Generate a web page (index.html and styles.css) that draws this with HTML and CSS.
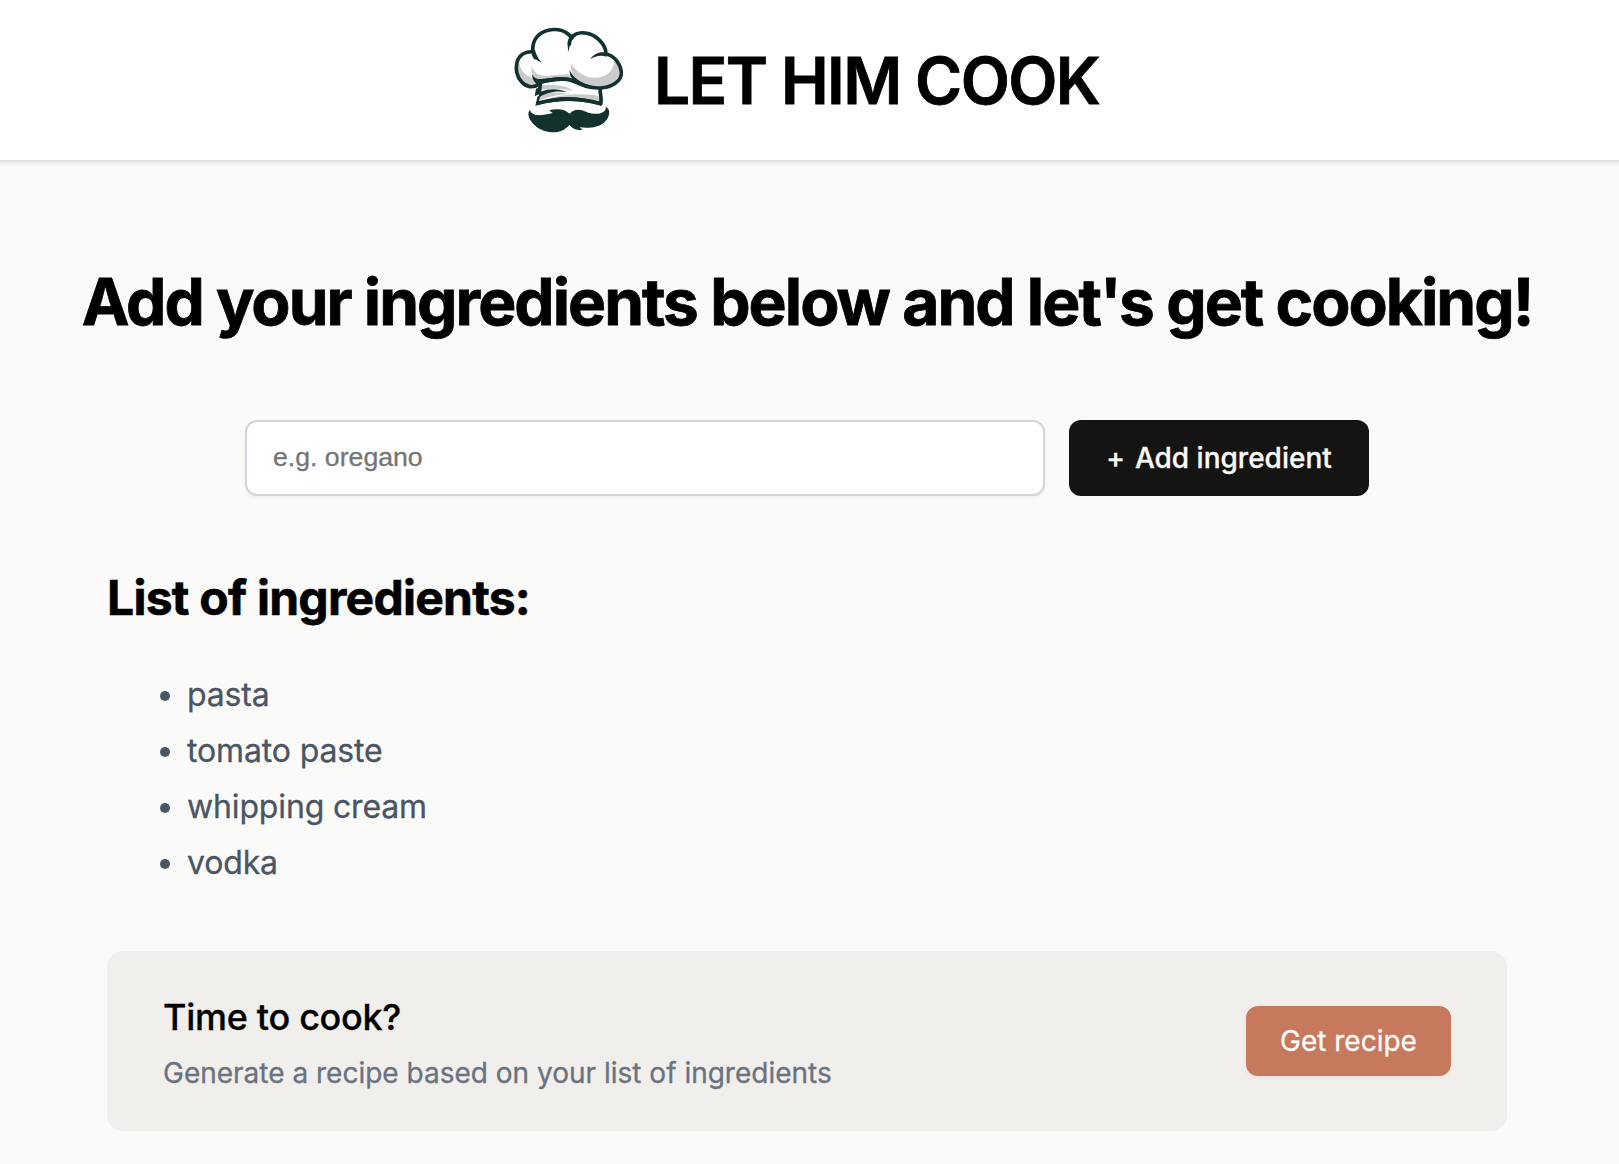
FILE: index.html
```
<!DOCTYPE html>
<html lang="en">
<head>
<meta charset="utf-8">
<title>Let Him Cook</title>
<link rel="stylesheet" href="styles.css">
</head>
<body>
<header class="header">
  <svg class="logo" viewBox="0 0 420 390" aria-hidden="true">
    <path class="fill-white" d="M121 204 C102 220 80 216 66 203 C53 188 47 165 50 144 C56 119 75 109 98 109 C96 70 124 43 162 43 C185 43 203 52 215 67 C228 56 244 51 260 54 C293 60 314 84 318 116 C345 122 362 148 364 175 C363 199 343 212 316 220 L302 228 C300 240 306 250 302 268 C235 252 168 253 109 268 L120 235 L110 240 Z"/>
    <g class="shade">
      <path d="M57 142 C63 172 80 187 108 192 L118 209 C92 220 72 211 62 192 C55 175 52 157 57 142Z"/>
      <path d="M94 149 C101 174 116 184 143 182 L203 177 C217 181 216 188 211 192 C180 184 145 191 119 203 C103 195 93 177 94 149Z"/>
      <path d="M210 143 C229 171 259 190 289 188 C321 185 339 169 344 137 C351 137 355 148 358 169 C357 201 334 213 300 216 C266 216 239 208 219 190Z"/>
      <path d="M124 209 C158 211 190 206 222 228 C189 220 157 220 121 224Z"/>
      <path d="M119 238 C157 230 184 231 208 237 C176 238 149 244 118 257Z"/>
      <path d="M137 254 C184 237 234 234 288 241 L300 247 L300 265 C243 246 191 246 137 254Z"/>
    </g>
    <g class="outline">
      <path d="M120 206 C99 222 78 215 65 201 C51 185 46 163 51 142 C57 120 76 109 99 110"/>
      <path d="M106 128 C92 106 98 77 116 60 C140 39 182 38 204 57 C210 62 213 65 216 69"/>
      <path d="M208 88 C208 77 214 65 226 58 C246 48 277 55 296 73 C311 87 318 100 318 117 C343 122 362 147 364 173 C365 200 333 218 300 219 C267 220 239 209 219 196 C192 185 151 195 116 202"/>
      <path d="M121 205 L118 233"/>
      <path d="M301 222 C298 237 307 244 302 266"/>
      <path d="M113 265 C173 248 235 248 302 266"/>
    </g>
    <g class="ink">
      <path d="M99 105 C101 127 108 137 124 142 C117 132 110 124 105 105Z"/>
      <path d="M205 110 C202 91 202 75 211 66 L219 70 C208 82 210 97 205 110Z"/>
      <path d="M270 133 C284 112 302 110 321 112 L320 125 C301 119 287 123 270 133Z"/>
      <path d="M96 176 C103 195 120 194 142 190 C174 186 205 187 217 191 C211 183 208 176 209 164 C217 188 245 206 282 214 L275 222 C242 216 218 199 190 198 C160 197 136 205 112 208 C102 202 96 189 96 176Z"/>
      <path d="M108 221 L124 215 L120 231 C151 219 177 222 200 231 C167 226 137 232 113 250 L118 237 L104 244Z"/>
      <path d="M106 272 L113 244 L121 243 L116 261 C180 239 244 243 305 265 L304 272 C237 253 173 254 106 272Z"/>
      <path d="M90 285 C96 305 123 303 158 294 L147 286 C178 280 193 283 209 296 C222 280 241 282 258 290 C282 301 321 298 317 275 C333 282 331 306 312 323 C295 337 269 340 239 337 L248 345 C230 347 216 340 209 329 C193 347 174 353 154 352 C125 349 104 336 91 315 C84 303 83 293 90 285Z"/>
    </g>
  </svg>
  <h1 class="brand">LET HIM COOK</h1>
</header>
<main class="main">
  <h2 class="tagline">Add your ingredients below and let's get cooking!</h2>
  <form class="add-form">
    <input class="add-input" type="text" placeholder="e.g. oregano" aria-label="Add ingredient">
    <button class="add-button" type="button"><span class="plus">+</span><span>Add ingredient</span></button>
  </form>
  <section class="content">
    <h2 class="list-title">List of ingredients:</h2>
    <ul class="list">
      <li>pasta</li>
      <li>tomato paste</li>
      <li>whipping cream</li>
      <li>vodka</li>
    </ul>
    <div class="card">
      <div>
        <h3 class="card-title">Time to cook?</h3>
        <p class="card-text">Generate a recipe based on your list of ingredients</p>
      </div>
      <button class="recipe-button" type="button">Get recipe</button>
    </div>
  </section>
</main>
</body>
</html>
```
FILE: styles.css
```
* { box-sizing: border-box; }
body { margin: 0; background: #fafaf8; color: #000; font-family: Inter, sans-serif; overflow: hidden; -webkit-text-stroke: .3px currentColor; }
h1, h2, h3, p, ul { margin: 0; }
button { border: 0; font-family: inherit; }

.header { display: flex; height: 160px; margin: 0 -8px; padding: 15px 0 15px 508px; gap: 14px; background: #fff; box-shadow: 0 2px 6px rgba(0,0,0,.1), 0 2px 4px -2px rgba(0,0,0,.1); }
.logo { width: 140px; height: 130px; flex: none; }
.fill-white { fill: #fff; }
.shade { fill: #cbcbcb; }
.outline { fill: none; stroke: #12312f; stroke-width: 11; stroke-linecap: round; stroke-linejoin: round; }
.ink { fill: #12312f; }
.brand { font-size: 64px; line-height: 132px; font-weight: 600; letter-spacing: -1.6px; white-space: nowrap; -webkit-text-stroke-width: .8px; }

.main { width: 1614px; display: flex; flex-direction: column; align-items: center; padding-top: 103px; }
.tagline { font-size: 64px; line-height: 77px; font-weight: 700; letter-spacing: -1.96px; white-space: nowrap; -webkit-text-stroke-width: .8px; }
.add-form { display: flex; gap: 24px; margin-top: 80px; }
.add-input { width: 800px; height: 76px; border: 2px solid #d1d5db; border-radius: 12px; padding: 0 26px 2px; background: #fff; font: 26.667px "Liberation Sans", Arial, sans-serif; box-shadow: 0 2px 4px rgba(0,0,0,.05); }
.add-input::placeholder { color: #757575; }
.add-button { display: flex; align-items: center; justify-content: center; gap: 10px; width: 300px; height: 76px; border-radius: 12px; background: #141413; color: #fafaf8; font-size: 28px; font-weight: 500; padding: 0; }

.content { width: 1400px; }
.list-title { margin-top: 73px; font-size: 48px; line-height: 58px; font-weight: 700; letter-spacing: -.74px; -webkit-text-stroke-width: .6px; }
.list { margin-top: 40px; padding-left: 80px; color: #4b5563; font-size: 32px; line-height: 56px; letter-spacing: -.15px; }
.card { display: flex; align-items: center; justify-content: space-between; height: 180px; margin-top: 60px; padding: 0 56px; border-radius: 16px; background: #f0efeb; }
.card-title { padding-top: 8px; font-size: 36px; line-height: 56px; font-weight: 500; letter-spacing: -.3px; }
.card-text { font-size: 28px; line-height: 56px; color: #6b7280; }
.recipe-button { width: 205px; height: 70px; border-radius: 12px; background: #c6795d; color: #fafaf8; font-size: 28px; padding: 0; box-shadow: 0 2px 4px rgba(0,0,0,.05); }
```
